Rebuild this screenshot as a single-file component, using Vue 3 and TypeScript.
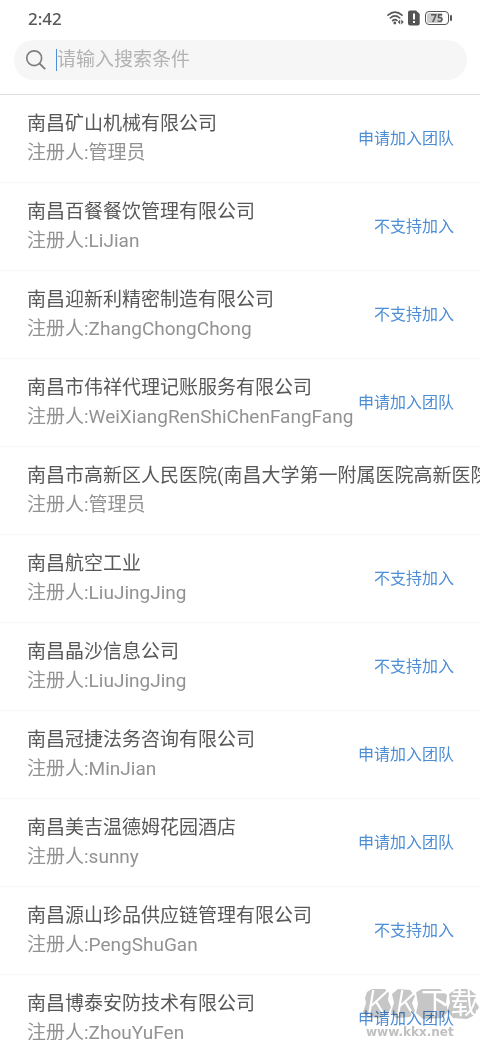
<script setup lang="ts">
import { ref } from 'vue'

interface Team {
  name: string
  owner: string
  action: '申请加入团队' | '不支持加入' | ''
}

const keyword = ref('')

const teams: Team[] = [
  { name: '南昌矿山机械有限公司', owner: '管理员', action: '申请加入团队' },
  { name: '南昌百餐餐饮管理有限公司', owner: 'LiJian', action: '不支持加入' },
  { name: '南昌迎新利精密制造有限公司', owner: 'ZhangChongChong', action: '不支持加入' },
  { name: '南昌市伟祥代理记账服务有限公司', owner: 'WeiXiangRenShiChenFangFang', action: '申请加入团队' },
  { name: '南昌市高新区人民医院(南昌大学第一附属医院高新医院)', owner: '管理员', action: '' },
  { name: '南昌航空工业', owner: 'LiuJingJing', action: '不支持加入' },
  { name: '南昌晶沙信息公司', owner: 'LiuJingJing', action: '不支持加入' },
  { name: '南昌冠捷法务咨询有限公司', owner: 'MinJian', action: '申请加入团队' },
  { name: '南昌美吉温德姆花园酒店', owner: 'sunny', action: '申请加入团队' },
  { name: '南昌源山珍品供应链管理有限公司', owner: 'PengShuGan', action: '不支持加入' },
  { name: '南昌博泰安防技术有限公司', owner: 'ZhouYuFen', action: '申请加入团队' },
]
</script>

<template>
  <div class="page">
    <header class="header">
      <div class="status">
        <time class="clock">2:42</time>
        <div class="indicators">
          <svg class="wifi" width="18" height="16" viewBox="0 0 18 16" aria-label="Wi-Fi">
            <g fill="none" stroke="#555" stroke-width="1.6" stroke-linecap="round">
              <path d="M1 5.2Q8 -1 15 5.2" />
              <path d="M3.3 8Q8 3.8 12.7 8" />
              <path d="M5.6 10.7Q8 8.5 10 10.5" />
            </g>
            <circle cx="7.8" cy="13" r="1.4" fill="#555" />
            <path d="M13.2 9.6v4.8L10.8 12zM14.3 9.6v4.8l2.4-2.4z" fill="#555" />
          </svg>
          <svg class="sim" width="12" height="16" viewBox="0 0 12 16" aria-label="SIM">
            <path d="M2 .5h6L11.7 4v9.5a2 2 0 0 1-2 2H2a2 2 0 0 1-2-2v-11a2 2 0 0 1 2-2z" fill="#555" />
            <path d="M5 3.5h2v6H5zM5 11h2v2H5z" fill="#fff" />
          </svg>
          <div class="battery"><span class="level">75</span></div>
        </div>
      </div>
      <label class="search">
        <svg width="22" height="22" viewBox="0 0 22 22" aria-hidden="true">
          <circle cx="9.2" cy="9.2" r="7.4" fill="none" stroke="#808080" stroke-width="1.7" />
          <path d="M14.5 14.5L20.2 20.2" stroke="#808080" stroke-width="1.9" />
        </svg>
        <span class="caret"></span>
        <input v-model="keyword" type="text" placeholder="请输入搜索条件" aria-label="搜索" />
      </label>
    </header>

    <ul class="list">
      <li v-for="team in teams" :key="team.name" class="row">
        <div class="info">
          <div class="name">{{ team.name }}</div>
          <div class="owner">注册人:{{ team.owner }}</div>
        </div>
        <button v-if="team.action" type="button" class="action">{{ team.action }}</button>
      </li>
    </ul>

    <div class="watermark">
      <div class="brand">
        <svg viewBox="0 0 116 34" width="116" height="34" aria-hidden="true">
          <g fill="#c6c6c6">
            <path d="M4 4L9 1l13 0 4 4-1 7 3 7-3 7-7 4-13-1-5-5 3-9-1-5z" />
            <path d="M29 6l6-5 12 1 5 6-3 7 3 8-5 6-14 1-5-6 3-9z" />
            <path d="M53 4l6-3h18l7 6-1 8 2 9-6 6-19 1-7-6 2-9z" />
            <path d="M86 6l7-5h13l7 5-1 7 4 6-4 8-8 4-14-1-6-7 3-8z" />
          </g>
        </svg>
        <span class="brand-text">
          <span class="latin">K</span><span class="latin">K</span><span>下</span><span>载</span>
        </span>
      </div>
      <div class="site">www.kkx.net</div>
    </div>
  </div>
</template>

<style>
body {
  margin: 0;
  background: #fff;
}
</style>

<style scoped>
.page {
  position: relative;
  height: 100vh;
  overflow: hidden;
  background: #fff;
  font-family: Roboto, "Noto Sans CJK SC", sans-serif;
  color: #585858;
}

.header {
  box-sizing: border-box;
  padding: 0 13px 14px 14px;
  border-bottom: 1px solid #dedede;
}

.status {
  display: flex;
  justify-content: space-between;
  align-items: flex-start;
  height: 40px;
  padding: 0 14px;
  box-sizing: border-box;
}

.clock {
  font-family: "Noto Sans", sans-serif;
  font-size: 17px;
  font-weight: 500;
  line-height: 37px;
}

.indicators {
  display: flex;
  align-items: center;
  gap: 3px;
  height: 36px;
}

.battery {
  position: relative;
  box-sizing: border-box;
  width: 24px;
  height: 14px;
  padding: 1px;
  margin: 0 4px 0 2px;
  border: 1px solid #555;
  border-radius: 4px;
}

.battery::after {
  content: "";
  position: absolute;
  top: 3px;
  right: -4px;
  width: 2px;
  height: 6px;
  border-radius: 1px;
  background: #555;
}

.level {
  display: block;
  border-radius: 2px;
  background: linear-gradient(to right, #ccc 75%, #fff 75%);
  font: bold 11px/10px "Noto Sans", sans-serif;
  text-align: center;
}

.search {
  display: flex;
  align-items: center;
  height: 40px;
  padding: 0 16px 0 11px;
  border-radius: 20px;
  background: #f6f6f6;
}

.caret {
  width: 1px;
  height: 22px;
  margin-left: 9px;
  background: #4a90d9;
}

input {
  flex: 1;
  min-width: 0;
  padding: 0;
  border: 0;
  outline: 0;
  background: transparent;
  color: #585858;
  font: inherit;
  font-size: 19px;
  line-height: 28px;
}

input::placeholder {
  color: #b2b2b2;
  opacity: 1;
}

.list {
  margin: 0;
  padding: 0;
  list-style: none;
}

.row {
  display: flex;
  align-items: center;
  justify-content: space-between;
  padding: 15px 26px 14px 27px;
  border-bottom: 1px solid #f7f7f7;
}

.info {
  flex: none;
  white-space: nowrap;
  font-size: 19px;
}

.name {
  line-height: 28px;
}

.owner {
  line-height: 30px;
  color: #929292;
}

.action {
  flex: none;
  padding: 0;
  border: 0;
  background: none;
  color: #4e8ed4;
  font: inherit;
  font-size: 16px;
  line-height: 24px;
  white-space: nowrap;
}

.watermark {
  position: absolute;
  right: 1px;
  bottom: 0;
  width: 116px;
  pointer-events: none;
  mix-blend-mode: multiply;
}

.brand {
  position: relative;
  height: 34px;
}

.brand svg {
  display: block;
}

.brand-text {
  position: absolute;
  inset: 0;
  display: grid;
  grid-template-columns: repeat(4, 1fr);
  color: #fff;
  font-size: 29px;
  line-height: 32px;
  text-align: center;
}

.latin {
  font-size: 36px;
  font-style: italic;
  font-weight: 300;
}

.site {
  padding: 2px 0 0 3px;
  color: #c0c0c0;
  font: bold 12px/16px "DejaVu Sans", sans-serif;
}
</style>
